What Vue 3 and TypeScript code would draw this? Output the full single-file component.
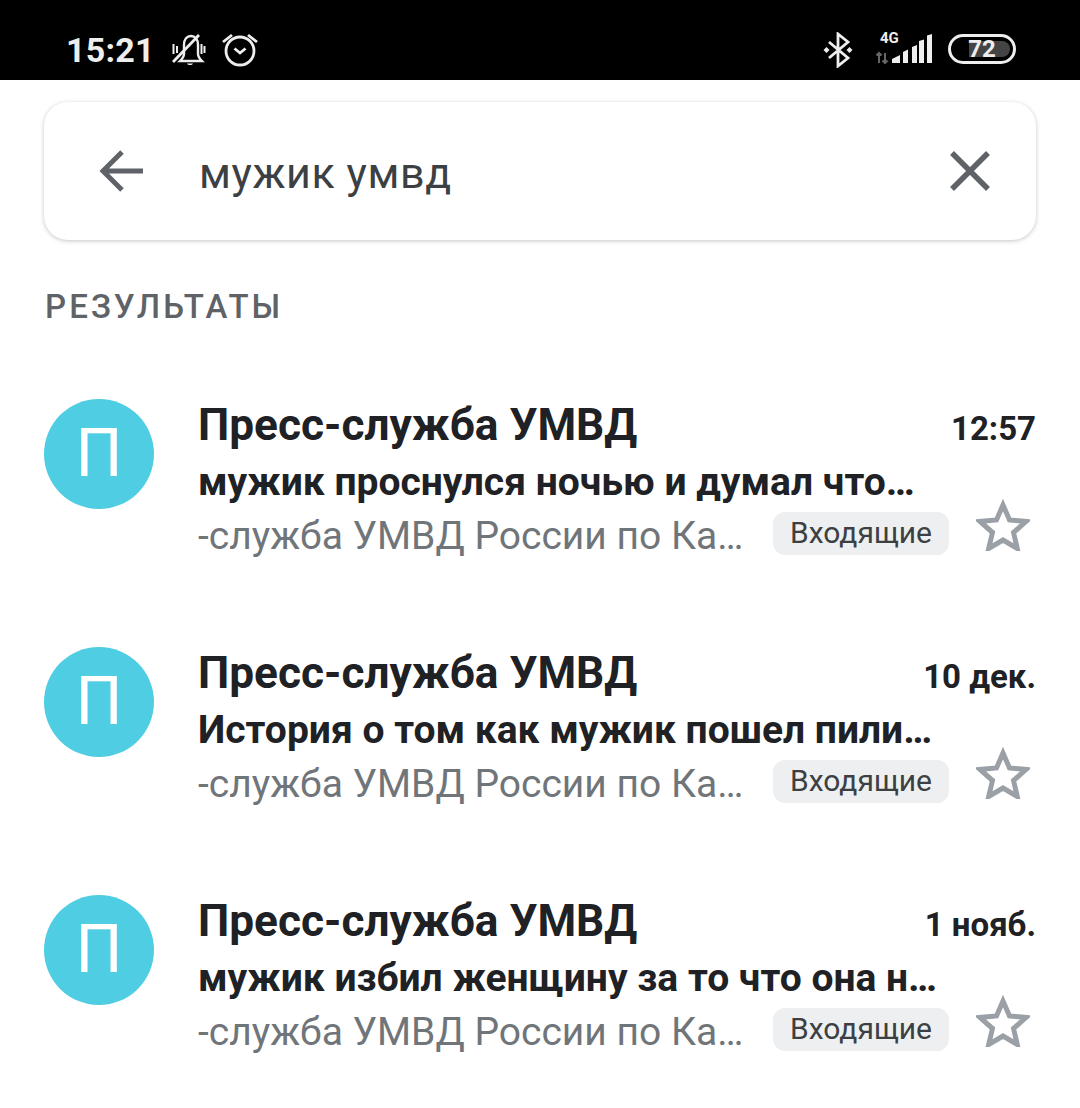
<script setup lang="ts">
interface IResult {
  id: number;
  time: string;
  subject: string;
}

const results: IResult[] = [
  { id: 1, time: "12:57", subject: "мужик проснулся ночью и думал что…" },
  { id: 2, time: "10 дек.", subject: "История о том как мужик пошел пили…" },
  { id: 3, time: "1 нояб.", subject: "мужик избил женщину за то что она н…" },
];
</script>

<template>
  <div class="screen">
    <div class="status-bar">
      <div class="status-left">
        <span class="clock">15:21</span>
        <svg class="ic-bell" width="36" height="36" viewBox="0 0 36 36" fill="none" stroke="#eee" stroke-width="2.4">
          <path d="M10 29c2-2 4-4 4-7v-9c0-6 3-9 7-9s7 3 7 9v9c0 3 2 5 4 7z" />
          <path d="M17 31.500c1 2 5 2 6 0z" fill="#eee" stroke="none" />
          <path d="M3.500 12v10M7 14v7M31.500 12v10M34.500 14v7" stroke-width="2" />
          <path d="M29 3 L3 30" stroke-width="2.800" />
        </svg>
        <svg class="ic-alarm" width="36" height="36" viewBox="0 0 36 36" fill="none" stroke="#eee" stroke-width="2.8">
          <circle cx="18" cy="19" r="14" />
          <path d="M12.500 16.500l5.500 4.500 5.500-4.500" />
          <path d="M1 10l9-7M35 10l-9-7" />
        </svg>
      </div>
      <div class="status-right">
        <svg class="ic-bt" width="30" height="36" viewBox="0 0 30 36" fill="none" stroke="#eee" stroke-width="2.800">
          <path d="M6 10l19 16-10 8V2l10 8L6 26" />
          <path d="M3.500 15l3 3-3 3-3-3zM26.500 15l3 3-3 3-3-3z" fill="#eee" stroke="none" />
        </svg>
        <div class="signal">
          <span class="net">4G</span>
          <svg width="58" height="30" viewBox="0 0 58 30">
            <path d="M4 29V19M1.500 21.500L4 19l2.500 2.500M10 19v10M7.500 26.500L10 29l2.500-2.500" stroke="#666" stroke-width="2" fill="none" />
            <path d="M17 29v-4l8-4v8zM28 29V18l5-2.500V29zM37 29V13l5-2V29zM44 29V7l5-1.500V29zM52 29V1.500l5-1.500V29z" fill="#eee" />
          </svg>
        </div>
        <div class="battery">
          <div class="battery-fill"></div>
          <span class="battery-text">72</span>
        </div>
      </div>
    </div>

    <div class="search-card">
      <svg class="ic-back" width="48" height="48" viewBox="0 0 48 48" fill="none" stroke="#5f6368" stroke-width="5">
        <path d="M45 24H5M24 5L5 24l19 19" />
      </svg>
      <span class="query">мужик умвд</span>
      <svg class="ic-close" width="40" height="40" viewBox="0 0 40 40" fill="none" stroke="#5f6368" stroke-width="5.500">
        <path d="M2 2l36 36M38 2L2 38" />
      </svg>
    </div>

    <div class="section-title">РЕЗУЛЬТАТЫ</div>

    <div class="results">
      <div v-for="r in results" :key="r.id" class="row">
        <div class="avatar">П</div>
        <div class="body">
          <div class="line-top">
            <span class="sender">Пресс-служба УМВД</span>
            <span class="time">{{ r.time }}</span>
          </div>
          <div class="subject">{{ r.subject }}</div>
          <div class="line-bottom">
            <span class="snippet">-служба УМВД России по Ка…</span>
            <span class="chip">Входящие</span>
            <svg class="ic-star" width="54" height="52" viewBox="0 0 54 52" fill="none" stroke="#9aa0a6" stroke-width="5">
              <path d="M27 6l6.500 15 16.500 1.500-12.500 11 3.800 16L27 41 12.700 49.500l3.800-16L4 22.500 20.500 21z" />
            </svg>
          </div>
        </div>
      </div>
    </div>
  </div>
</template>

<style scoped>
.screen {
  width: 1080px;
  height: 1108px;
  overflow: hidden;
  background: #fff;
  font-family: Roboto, "Liberation Sans", sans-serif;
}

.status-bar {
  height: 80px;
  background: #000;
  display: flex;
  justify-content: space-between;
  padding: 0 64px 0 66px;
  box-sizing: border-box;
  color: #eee;
}
.status-left,
.status-right {
  display: flex;
  align-items: flex-start;
  padding-top: 32px;
}
.clock {
  font-size: 34px;
  line-height: 36px;
  font-weight: 700;
  letter-spacing: 0.2px;
  width: 104px;
}
.ic-alarm {
  margin-left: 16px;
}
.signal {
  position: relative;
  width: 58px;
  height: 34px;
  margin-left: 22px;
}
.signal svg {
  position: absolute;
  left: 0;
  top: 2px;
}
.net {
  position: absolute;
  left: 5px;
  top: -1px;
  font-size: 15px;
  line-height: 15px;
  font-weight: 700;
}
.battery {
  position: relative;
  width: 68px;
  height: 30px;
  margin: 2px 0 0 15px;
  border: 3px solid #eee;
  border-radius: 16px;
  box-sizing: border-box;
  display: flex;
  align-items: center;
  justify-content: center;
}
.battery-fill {
  position: absolute;
  left: 18px;
  top: 4px;
  bottom: 4px;
  width: 41px;
  background: #444;
  border-radius: 0 8px 8px 0;
}
.battery-text {
  position: relative;
  font-size: 24px;
  font-weight: 700;
}

.search-card {
  margin: 22px 44px 0;
  height: 138px;
  box-sizing: border-box;
  border-radius: 24px;
  background: #fff;
  box-shadow: 0 1px 4px rgba(60, 64, 67, 0.3);
  display: flex;
  align-items: center;
  padding: 0 46px 0 54px;
}
.ic-back {
  flex: none;
}
.query {
  flex: 1;
  margin-left: 53px;
  font-size: 43px;
  letter-spacing: 0.6px;
  color: #3c4043;
  padding-top: 4px;
}

.section-title {
  margin: 49px 45px 0;
  font-size: 33px;
  line-height: 36px;
  font-weight: 500;
  letter-spacing: 3.1px;
  color: #5f6368;
}

.results {
  margin-top: 74px;
  display: flex;
  flex-direction: column;
  gap: 18px;
}
.row {
  display: flex;
  height: 230px;
  padding: 0 44px;
}
.avatar {
  flex: none;
  width: 110px;
  height: 110px;
  border-radius: 50%;
  background: #4fcde3;
  color: #fff;
  font-size: 66px;
  line-height: 110px;
  text-align: center;
}
.body {
  flex: 1;
  min-width: 0;
  margin-left: 44px;
}
.line-top {
  display: flex;
  justify-content: space-between;
  align-items: baseline;
  height: 54px;
}
.sender {
  font-size: 44.200px;
  font-weight: 700;
  color: #202124;
}
.time {
  font-size: 33px;
  font-weight: 700;
  color: #202124;
}
.subject {
  font-size: 39px;
  line-height: 50px;
  padding-top: 4px;
  font-weight: 700;
  color: #202124;
  white-space: nowrap;
}
.line-bottom {
  display: flex;
  align-items: center;
  height: 52px;
}
.snippet {
  width: 575px;
  flex: none;
  padding-top: 6px;
  font-size: 39px;
  color: #70757a;
  white-space: nowrap;
  overflow: hidden;
}
.chip {
  flex: none;
  width: 176px;
  height: 43px;
  line-height: 41px;
  text-align: center;
  border-radius: 12px;
  background: #eeeff0;
  font-size: 30px;
  color: #3c4043;
}
.ic-star {
  flex: none;
  margin: 0 0 16px 27px;
}
</style>
